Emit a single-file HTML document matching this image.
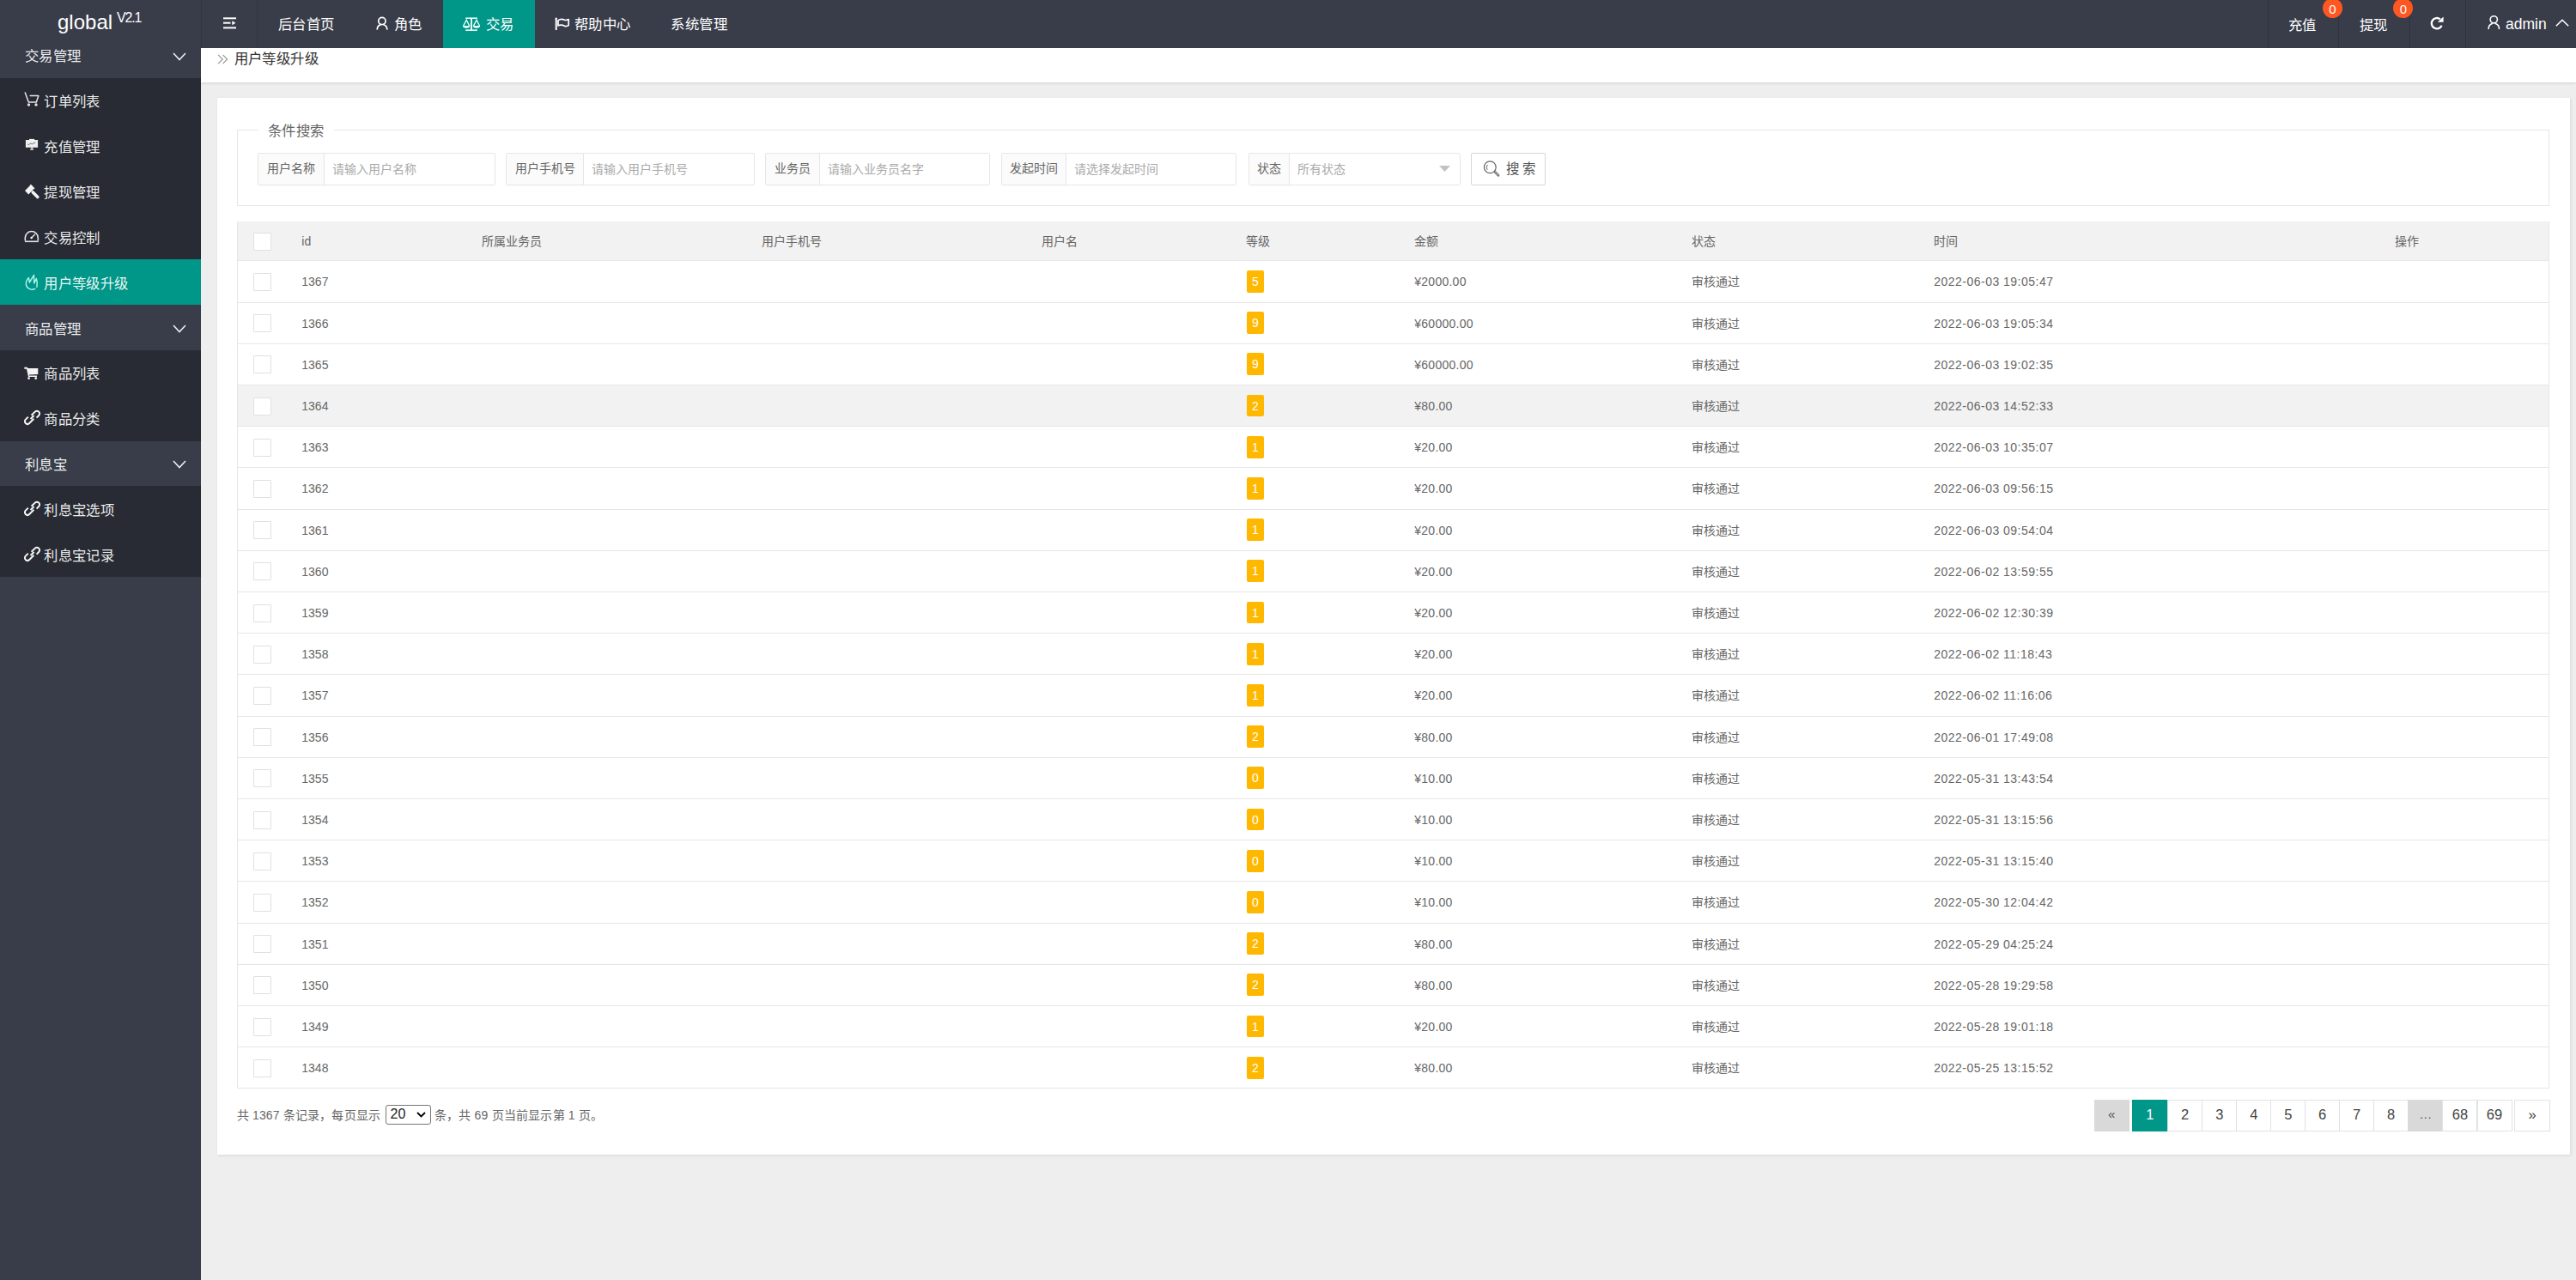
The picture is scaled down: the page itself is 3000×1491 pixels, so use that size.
<!DOCTYPE html>
<html lang="zh-CN"><head><meta charset="utf-8"><title>用户等级升级</title>
<style>
*{margin:0;padding:0;box-sizing:border-box}
html,body{width:3000px;height:1491px;overflow:hidden;background:#eeeeee;font-family:"Liberation Sans",sans-serif;color:#666}
.a{position:absolute}
.hd{position:absolute;left:0;top:0;width:3000px;height:56px;background:#393D49;z-index:5}
.side{position:absolute;left:0;top:0;width:234px;height:1491px;background:#393D49;overflow:hidden;z-index:3}
.nt{position:absolute;white-space:nowrap;color:#fff;font-size:16.4px;letter-spacing:0.4px;line-height:20px}
.par{position:absolute;left:0;width:234px;height:52.85px;background:#393D49}
.chg{position:absolute;left:0;width:234px;background:#282B33}
.it{position:absolute;left:0;width:234px;height:52.85px}
.it .t{position:absolute;left:51.2px;top:17.6px;font-size:16.4px;letter-spacing:0.4px;line-height:20px;color:rgba(255,255,255,.93);white-space:nowrap}
.par .t{position:absolute;left:28.75px;top:17.55px;font-size:16.4px;letter-spacing:0.4px;line-height:20px;color:rgba(255,255,255,.93);white-space:nowrap}
.ico{position:absolute}
.crumb{position:absolute;left:234px;top:56px;width:2766px;height:40.3px;background:#fff;box-shadow:0 1px 3px rgba(0,0,0,.12);z-index:2}
.card{position:absolute;left:252.7px;top:114px;width:2740.3px;height:1231px;background:#fff;box-shadow:1px 1px 3px rgba(0,0,0,.1)}
.fs{position:absolute;border:1px solid #e6e6e6}
.grp{position:absolute;top:178px;height:38px;border:1px solid #e6e6e6;border-radius:2px;background:#fff}
.lab{position:absolute;left:0;top:0;height:36px;background:#FBFBFB;border-right:1px solid #e6e6e6}
.gt{position:absolute;font-size:14px;line-height:18px;white-space:nowrap}
.tbl{position:absolute;left:276px;width:2693px;border:1px solid #e6e6e6;border-top:0}
.row{position:absolute;left:0;width:2691px;border-bottom:1px solid #e6e6e6}
.c{position:absolute;font-size:14px;line-height:18px;white-space:nowrap;color:#666}
.cb{position:absolute;left:18px;width:21px;height:21px;border:1px solid #e0e0e0;background:#fff;border-radius:1px}
.bdg{position:absolute;width:20.3px;height:25.8px;background:#FFB800;color:#fff;border-radius:2px;font-size:14px;line-height:27.6px;text-align:center}
.pg{position:absolute;top:1281px;height:37.2px;border:1px solid #e2e2e2;background:#fff;color:#444;font-size:16.5px;line-height:32.5px;text-align:center}
</style></head><body>

<div class="side">
<div class="par" style="top:37.95px"><span class="t">交易管理</span><svg class="ico" style="left:201px;top:22.6px" width="16" height="10" viewBox="0 0 16 10"><path d="M1 1 L8 8.6 L15 1" fill="none" stroke="#fff" stroke-opacity=".9" stroke-width="1.6"/></svg></div>
<div class="chg" style="top:90.8px;height:264.25px">
<div class="it" style="top:0.0px;"><span class="t">订单列表</span><svg class="ico" style="left:24px;top:12.6px" width="28" height="28" viewBox="0 0 28 28"><path d="M5.3 5 L9.3 16 L18.3 16 L20.9 8.6 L11.2 8.6" fill="none" stroke="#fff" stroke-opacity=".88" stroke-width="1.5" stroke-linejoin="round" stroke-linecap="round"/><circle cx="9.5" cy="19" r="1.7" fill="#fff" fill-opacity=".88"/><circle cx="18" cy="19" r="1.7" fill="#fff" fill-opacity=".88"/></svg></div>
<div class="it" style="top:52.85px;"><span class="t">充值管理</span><svg class="ico" style="left:24px;top:12.6px" width="28" height="28" viewBox="0 0 28 28"><rect x="5.9" y="7" width="14.2" height="8.8" fill="#fff" fill-opacity=".92"/><rect x="10" y="5.9" width="6.2" height="1.6" fill="#fff" fill-opacity=".92"/><rect x="12.3" y="15.5" width="1.8" height="2.3" fill="#fff" fill-opacity=".9"/><rect x="11" y="17.6" width="4.2" height="1.1" fill="#fff" fill-opacity=".9"/><path d="M8.5 12.3 C10 13.5, 11 10, 12.8 11.5 C14 12.6, 15 10.2, 17.2 10" fill="none" stroke="#555" stroke-width="0.9"/></svg></div>
<div class="it" style="top:105.7px;"><span class="t">提现管理</span><svg class="ico" style="left:24px;top:12.6px" width="28" height="28" viewBox="0 0 28 28"><path d="M11.8 5.5 L16.6 10.5 L15.2 11.3 L10.4 16.3 L9.2 17.5 L5 12.9 L6.2 12.1 L11 7.1 Z" fill="#fff" fill-opacity=".95"/><path d="M14.3 15 L19.8 20.5" stroke="#fff" stroke-opacity=".95" stroke-width="3.6" stroke-linecap="round"/></svg></div>
<div class="it" style="top:158.55px;"><span class="t">交易控制</span><svg class="ico" style="left:24px;top:12.6px" width="28" height="28" viewBox="0 0 28 28"><path d="M5.3 18.5 L5.3 15 A7.5 7.5 0 0 1 20.3 15 L20.3 18.5" fill="none" stroke="#fff" stroke-opacity=".88" stroke-width="1.6"/><path d="M5 19.3 L20.8 19.3" stroke="#fff" stroke-opacity=".88" stroke-width="1.6"/><path d="M12.7 15 L16.6 11" stroke="#fff" stroke-opacity=".9" stroke-width="1.3" stroke-linecap="round"/><circle cx="12.6" cy="15" r="1.2" fill="#fff"/></svg></div>
<div class="it" style="top:211.4px;background:#009688;"><span class="t">用户等级升级</span><svg class="ico" style="left:24px;top:12.6px" width="28" height="28" viewBox="0 0 28 28"><path d="M16.8 21.4 C13 23.2, 7.2 21.8, 6.4 16.5 C5.9 13, 7.5 10.5, 9.5 8.5 L10.3 14 L15.5 5.5 L15.8 15 L18.3 9.5 C19.3 12, 19.9 15.5, 18.9 19.3" fill="none" stroke="#b9fff2" stroke-opacity=".9" stroke-width="1.5" stroke-linejoin="round" stroke-linecap="round"/></svg></div>
</div>
<div class="par" style="top:355.05px"><span class="t">商品管理</span><svg class="ico" style="left:201px;top:22.6px" width="16" height="10" viewBox="0 0 16 10"><path d="M1 1 L8 8.6 L15 1" fill="none" stroke="#fff" stroke-opacity=".9" stroke-width="1.6"/></svg></div>
<div class="chg" style="top:407.9px;height:105.7px">
<div class="it" style="top:0.0px"><span class="t">商品列表</span><svg class="ico" style="left:24px;top:12.6px" width="28" height="28" viewBox="0 0 28 28"><path d="M4.3 7.8 L7.9 7.8 L8.4 8.9 L20.3 8.9 L20.3 16 L9.9 16.6 L10.2 17.6 L19 17.6 L19 19.1 L9 19.1 L7 9.7 L4.3 9.7 Z" fill="#fff" fill-opacity=".95"/><circle cx="9.6" cy="20.6" r="1.4" fill="#fff"/><circle cx="17.7" cy="20.6" r="1.4" fill="#fff"/></svg></div>
<div class="it" style="top:52.85px"><span class="t">商品分类</span><svg class="ico" style="left:24px;top:12.6px" width="28" height="28" viewBox="0 0 28 28"><g fill="none" stroke="#fff" stroke-opacity=".95" stroke-width="2"><path d="M13.2 11.2 L17.4 7 A3.1 3.1 0 0 1 21.8 11.4 L19.2 14" transform="translate(-0.6,-0.4)"/><path d="M15.6 13.6 L10.4 18.8 A3.1 3.1 0 0 1 6 14.4 L9 11.4" transform="translate(-0.2,1.2)"/><path d="M11.6 15 L15.6 11" /></g></svg></div>
</div>
<div class="par" style="top:513.6px"><span class="t">利息宝</span><svg class="ico" style="left:201px;top:22.6px" width="16" height="10" viewBox="0 0 16 10"><path d="M1 1 L8 8.6 L15 1" fill="none" stroke="#fff" stroke-opacity=".9" stroke-width="1.6"/></svg></div>
<div class="chg" style="top:566.45px;height:105.7px">
<div class="it" style="top:0.0px"><span class="t">利息宝选项</span><svg class="ico" style="left:24px;top:12.6px" width="28" height="28" viewBox="0 0 28 28"><g fill="none" stroke="#fff" stroke-opacity=".95" stroke-width="2"><path d="M13.2 11.2 L17.4 7 A3.1 3.1 0 0 1 21.8 11.4 L19.2 14" transform="translate(-0.6,-0.4)"/><path d="M15.6 13.6 L10.4 18.8 A3.1 3.1 0 0 1 6 14.4 L9 11.4" transform="translate(-0.2,1.2)"/><path d="M11.6 15 L15.6 11" /></g></svg></div>
<div class="it" style="top:52.85px"><span class="t">利息宝记录</span><svg class="ico" style="left:24px;top:12.6px" width="28" height="28" viewBox="0 0 28 28"><g fill="none" stroke="#fff" stroke-opacity=".95" stroke-width="2"><path d="M13.2 11.2 L17.4 7 A3.1 3.1 0 0 1 21.8 11.4 L19.2 14" transform="translate(-0.6,-0.4)"/><path d="M15.6 13.6 L10.4 18.8 A3.1 3.1 0 0 1 6 14.4 L9 11.4" transform="translate(-0.2,1.2)"/><path d="M11.6 15 L15.6 11" /></g></svg></div>
</div>
</div>
<div class="hd">
<div class="a" style="left:67px;top:11.3px;font-size:24px;line-height:30px;color:#fff;white-space:nowrap">global</div>
<div class="a" style="left:136px;top:10.6px;font-size:16px;letter-spacing:-1.2px;line-height:20px;color:#fff;white-space:nowrap">V2.1</div>
<div class="a" style="left:234px;top:0;width:1px;height:56px;background:rgba(0,0,0,.12)"></div>
<div class="a" style="left:299px;top:0;width:1px;height:56px;background:rgba(0,0,0,.12)"></div>
<svg class="a" style="left:259px;top:20px" width="17" height="14" viewBox="0 0 17 14"><rect x="1" y="0.3" width="15" height="2" fill="#fff"/><rect x="1" y="5.7" width="8.5" height="2" fill="#fff"/><path d="M11.3 4.2 L15.4 6.7 L11.3 9.2 Z" fill="#fff"/><rect x="1" y="11.4" width="15" height="2" fill="#fff"/></svg>
<div class="nt" style="left:323.8px;top:18px">后台首页</div>
<div class="a" style="left:516px;top:0;width:107px;height:56px;background:#009688"></div>
<svg class="a" style="left:432px;top:14px" width="28" height="28" viewBox="0 0 28 28"><circle cx="12.9" cy="10.5" r="4.1" fill="none" stroke="#fff" stroke-width="1.7"/><path d="M7.3 20 A5.9 5.9 0 0 1 11.3 14.6 M14.9 14.7 A5.9 5.9 0 0 1 18.8 20" fill="none" stroke="#fff" stroke-width="1.7" stroke-linecap="round"/></svg><svg class="a" style="left:535px;top:14px" width="28" height="28" viewBox="0 0 28 28"><g stroke="#e8fffb" fill="none"><path d="M7.2 7.2 L20.8 7.2" stroke-width="1.6"/><path d="M14 7.5 L14 21" stroke-width="2"/><path d="M7.2 21.2 L20.8 21.2" stroke-width="1.7"/><path d="M4.6 16.3 L8.2 9.3 L11.8 16.3 M16.4 16.3 L20 9.3 L23.6 16.3" stroke-width="1.4"/></g><path d="M4 16 L12.2 16 A4.1 2.8 0 0 1 4 16 Z M15.9 16 L24.1 16 A4.1 2.8 0 0 1 15.9 16 Z" fill="#e8fffb"/></svg><svg class="a" style="left:640px;top:14px" width="28" height="28" viewBox="0 0 28 28"><path d="M7.7 8 L7.7 21" stroke="#fff" stroke-width="2"/><circle cx="7.7" cy="7.8" r="1.2" fill="#fff"/><path d="M10 9.8 C13 7.5, 16 8.5, 17.5 9.2 C19 9.9, 21 9.2, 22.2 8.6 L22.2 15.6 C21 16.3, 19 17, 17.5 16.2 C16 15.4, 13 14.4, 10 15.8 Z" fill="none" stroke="#fff" stroke-width="1.7" stroke-linejoin="round"/></svg>
<div class="nt" style="left:458.8px;top:18px">角色</div>
<div class="nt" style="left:566px;top:18px">交易</div>
<div class="nt" style="left:668.8px;top:18px">帮助中心</div>
<div class="nt" style="left:781.4px;top:18px">系统管理</div>
<div class="a" style="left:2641px;top:0;width:1px;height:56px;background:rgba(0,0,0,.15)"></div>
<div class="a" style="left:2723.4px;top:0;width:1px;height:56px;background:rgba(0,0,0,.15)"></div>
<div class="a" style="left:2805.7px;top:0;width:1px;height:56px;background:rgba(0,0,0,.15)"></div>
<div class="a" style="left:2871px;top:0;width:1px;height:56px;background:rgba(0,0,0,.15)"></div>
<div class="nt" style="left:2665px;top:19px">充值</div>
<div class="nt" style="left:2747.5px;top:19px">提现</div>
<div class="a" style="left:2705.0px;top:-2.5px;width:23px;height:23px;border-radius:50%;background:#FF5722;color:#fff;font-size:15px;line-height:25px;text-align:center">0</div>
<div class="a" style="left:2787.3px;top:-2.5px;width:23px;height:23px;border-radius:50%;background:#FF5722;color:#fff;font-size:15px;line-height:25px;text-align:center">0</div>
<div class="nt" style="left:2918px;top:17.5px;font-size:17.5px;letter-spacing:0">admin</div>
<svg class="a" style="left:2824px;top:14px" width="28" height="28" viewBox="0 0 28 28"><path d="M19.6 15.8 A6.2 6.2 0 1 1 17.8 8.3" fill="none" stroke="#fff" stroke-width="2.3"/><path d="M14.8 11.8 L21.6 11.8 L21.6 5.4 Z" fill="#fff"/></svg><svg class="a" style="left:2890px;top:13px" width="28" height="28" viewBox="0 0 28 28"><circle cx="14.3" cy="9.8" r="4.1" fill="none" stroke="#fff" stroke-width="1.6"/><path d="M8.2 20.5 A6.3 6.3 0 0 1 12.4 14.4 M16.2 14.4 A6.3 6.3 0 0 1 20.5 20.5" fill="none" stroke="#fff" stroke-width="1.6" stroke-linecap="round"/></svg><svg class="a" style="left:2976px;top:22px" width="16" height="9" viewBox="0 0 16 9"><path d="M0.8 8.3 L8 1.3 L15.2 8.3" fill="none" stroke="#fff" stroke-width="1.6"/></svg>
</div>
<div class="crumb">
<svg class="a" style="left:18.5px;top:6.5px" width="13" height="12" viewBox="0 0 13 12"><path d="M1.2 0.8 L6.2 6 L1.2 11.2 M6.6 0.8 L11.6 6 L6.6 11.2" fill="none" stroke="#999" stroke-width="1.2"/></svg>
<div class="a" style="left:38.6px;top:2px;font-size:16.4px;letter-spacing:0.4px;line-height:20px;color:#333;white-space:nowrap">用户等级升级</div>
</div>
<div class="card"></div>
<div class="fs" style="left:276px;top:151px;width:2693px;height:89px"></div>
<div class="a" style="left:301px;top:142px;width:88.4px;height:22px;background:#fff"></div>
<div class="a" style="left:312px;top:142.2px;font-size:16.4px;letter-spacing:0.4px;line-height:20px;color:#666;white-space:nowrap">条件搜索</div>
<div class="grp" style="left:300.3px;width:276.3px"><div class="lab" style="width:77.0px"></div><div class="gt" style="left:9.5px;top:8.2px;color:#666">用户名称</div><div class="gt" style="left:86.0px;top:8.6px;color:#aaa">请输入用户名称</div></div>
<div class="grp" style="left:589.3px;width:289.3px"><div class="lab" style="width:90.2px"></div><div class="gt" style="left:9.5px;top:8.2px;color:#666">用户手机号</div><div class="gt" style="left:99.2px;top:8.6px;color:#aaa">请输入用户手机号</div></div>
<div class="grp" style="left:891.4px;width:261.6px"><div class="lab" style="width:62.5px"></div><div class="gt" style="left:9.5px;top:8.2px;color:#666">业务员</div><div class="gt" style="left:71.5px;top:8.6px;color:#aaa">请输入业务员名字</div></div>
<div class="grp" style="left:1165.6px;width:274.9px"><div class="lab" style="width:75.9px"></div><div class="gt" style="left:9.5px;top:8.2px;color:#666">发起时间</div><div class="gt" style="left:84.9px;top:8.6px;color:#aaa">请选择发起时间</div></div>
<div class="grp" style="left:1453.6px;width:247.4px"><div class="lab" style="width:47.9px"></div><div class="gt" style="left:9.5px;top:8.2px;color:#666">状态</div><div class="gt" style="left:56.9px;top:8.6px;color:#aaa">所有状态</div></div>
<svg class="a" style="left:1676.3px;top:192.5px" width="13" height="7" viewBox="0 0 13 7"><path d="M0 0 L13 0 L6.5 7 Z" fill="#c2c2c2"/></svg>
<div class="a" style="left:1713.4px;top:178px;width:86.4px;height:38px;border:1px solid #d6d6d6;border-radius:2px;background:#fff"></div>
<svg class="a" style="left:1725.5px;top:186.5px" width="21" height="21" viewBox="0 0 21 21"><circle cx="9.3" cy="7.8" r="6.9" fill="none" stroke="#666" stroke-width="1.2"/><path d="M15.2 13.6 L19 17.2" stroke="#666" stroke-width="2.8" stroke-linecap="round"/><path d="M15.2 13.6 L19 17.2" stroke="#fff" stroke-width="0.8" stroke-linecap="round"/><path d="M6.4 5 A4.6 4.6 0 0 0 6.2 10.8" fill="none" stroke="#666" stroke-width="1"/></svg>
<div class="a" style="left:1754.2px;top:187.3px;font-size:15.5px;line-height:20px;color:#555;white-space:nowrap;letter-spacing:-0.6px">搜 索</div>
<div class="tbl" style="top:258.1px;height:1010.3px">
<div class="row" style="top:0;height:46.3px;background:#f2f2f2"></div>
<div class="cb" style="top:12.65px"></div>
<div class="c" style="left:74.3px;top:14.15px">id</div>
<div class="c" style="left:284.4px;top:14.15px">所属业务员</div>
<div class="c" style="left:610.4px;top:14.15px">用户手机号</div>
<div class="c" style="left:935.7px;top:14.15px">用户名</div>
<div class="c" style="left:1174px;top:14.15px">等级</div>
<div class="c" style="left:1370.3px;top:14.15px">金额</div>
<div class="c" style="left:1692.6px;top:14.15px">状态</div>
<div class="c" style="left:1975.3px;top:14.15px">时间</div>
<div class="c" style="left:2512.4px;top:14.15px">操作</div>
<div class="row" style="top:46.3px;height:48.2px;">
<div class="cb" style="top:13.6px"></div>
<div class="c" style="left:74.3px;top:15.1px">1367</div>
<div class="bdg" style="left:1174.7px;top:10.7px">5</div>
<div class="c" style="left:1370.3px;top:15.1px;letter-spacing:0.25px">¥2000.00</div>
<div class="c" style="left:1692.6px;top:15.1px">审核通过</div>
<div class="c" style="left:1975.3px;top:15.1px;letter-spacing:0.48px">2022-06-03 19:05:47</div>
</div>
<div class="row" style="top:94.5px;height:48.2px;">
<div class="cb" style="top:13.6px"></div>
<div class="c" style="left:74.3px;top:15.1px">1366</div>
<div class="bdg" style="left:1174.7px;top:10.7px">9</div>
<div class="c" style="left:1370.3px;top:15.1px;letter-spacing:0.25px">¥60000.00</div>
<div class="c" style="left:1692.6px;top:15.1px">审核通过</div>
<div class="c" style="left:1975.3px;top:15.1px;letter-spacing:0.48px">2022-06-03 19:05:34</div>
</div>
<div class="row" style="top:142.7px;height:48.2px;">
<div class="cb" style="top:13.6px"></div>
<div class="c" style="left:74.3px;top:15.1px">1365</div>
<div class="bdg" style="left:1174.7px;top:10.7px">9</div>
<div class="c" style="left:1370.3px;top:15.1px;letter-spacing:0.25px">¥60000.00</div>
<div class="c" style="left:1692.6px;top:15.1px">审核通过</div>
<div class="c" style="left:1975.3px;top:15.1px;letter-spacing:0.48px">2022-06-03 19:02:35</div>
</div>
<div class="row" style="top:190.9px;height:48.2px;background:#f2f2f2;">
<div class="cb" style="top:13.6px"></div>
<div class="c" style="left:74.3px;top:15.1px">1364</div>
<div class="bdg" style="left:1174.7px;top:10.7px">2</div>
<div class="c" style="left:1370.3px;top:15.1px;letter-spacing:0.25px">¥80.00</div>
<div class="c" style="left:1692.6px;top:15.1px">审核通过</div>
<div class="c" style="left:1975.3px;top:15.1px;letter-spacing:0.48px">2022-06-03 14:52:33</div>
</div>
<div class="row" style="top:239.1px;height:48.2px;">
<div class="cb" style="top:13.6px"></div>
<div class="c" style="left:74.3px;top:15.1px">1363</div>
<div class="bdg" style="left:1174.7px;top:10.7px">1</div>
<div class="c" style="left:1370.3px;top:15.1px;letter-spacing:0.25px">¥20.00</div>
<div class="c" style="left:1692.6px;top:15.1px">审核通过</div>
<div class="c" style="left:1975.3px;top:15.1px;letter-spacing:0.48px">2022-06-03 10:35:07</div>
</div>
<div class="row" style="top:287.3px;height:48.2px;">
<div class="cb" style="top:13.6px"></div>
<div class="c" style="left:74.3px;top:15.1px">1362</div>
<div class="bdg" style="left:1174.7px;top:10.7px">1</div>
<div class="c" style="left:1370.3px;top:15.1px;letter-spacing:0.25px">¥20.00</div>
<div class="c" style="left:1692.6px;top:15.1px">审核通过</div>
<div class="c" style="left:1975.3px;top:15.1px;letter-spacing:0.48px">2022-06-03 09:56:15</div>
</div>
<div class="row" style="top:335.5px;height:48.2px;">
<div class="cb" style="top:13.6px"></div>
<div class="c" style="left:74.3px;top:15.1px">1361</div>
<div class="bdg" style="left:1174.7px;top:10.7px">1</div>
<div class="c" style="left:1370.3px;top:15.1px;letter-spacing:0.25px">¥20.00</div>
<div class="c" style="left:1692.6px;top:15.1px">审核通过</div>
<div class="c" style="left:1975.3px;top:15.1px;letter-spacing:0.48px">2022-06-03 09:54:04</div>
</div>
<div class="row" style="top:383.7px;height:48.2px;">
<div class="cb" style="top:13.6px"></div>
<div class="c" style="left:74.3px;top:15.1px">1360</div>
<div class="bdg" style="left:1174.7px;top:10.7px">1</div>
<div class="c" style="left:1370.3px;top:15.1px;letter-spacing:0.25px">¥20.00</div>
<div class="c" style="left:1692.6px;top:15.1px">审核通过</div>
<div class="c" style="left:1975.3px;top:15.1px;letter-spacing:0.48px">2022-06-02 13:59:55</div>
</div>
<div class="row" style="top:431.9px;height:48.2px;">
<div class="cb" style="top:13.6px"></div>
<div class="c" style="left:74.3px;top:15.1px">1359</div>
<div class="bdg" style="left:1174.7px;top:10.7px">1</div>
<div class="c" style="left:1370.3px;top:15.1px;letter-spacing:0.25px">¥20.00</div>
<div class="c" style="left:1692.6px;top:15.1px">审核通过</div>
<div class="c" style="left:1975.3px;top:15.1px;letter-spacing:0.48px">2022-06-02 12:30:39</div>
</div>
<div class="row" style="top:480.1px;height:48.2px;">
<div class="cb" style="top:13.6px"></div>
<div class="c" style="left:74.3px;top:15.1px">1358</div>
<div class="bdg" style="left:1174.7px;top:10.7px">1</div>
<div class="c" style="left:1370.3px;top:15.1px;letter-spacing:0.25px">¥20.00</div>
<div class="c" style="left:1692.6px;top:15.1px">审核通过</div>
<div class="c" style="left:1975.3px;top:15.1px;letter-spacing:0.48px">2022-06-02 11:18:43</div>
</div>
<div class="row" style="top:528.3px;height:48.2px;">
<div class="cb" style="top:13.6px"></div>
<div class="c" style="left:74.3px;top:15.1px">1357</div>
<div class="bdg" style="left:1174.7px;top:10.7px">1</div>
<div class="c" style="left:1370.3px;top:15.1px;letter-spacing:0.25px">¥20.00</div>
<div class="c" style="left:1692.6px;top:15.1px">审核通过</div>
<div class="c" style="left:1975.3px;top:15.1px;letter-spacing:0.48px">2022-06-02 11:16:06</div>
</div>
<div class="row" style="top:576.5px;height:48.2px;">
<div class="cb" style="top:13.6px"></div>
<div class="c" style="left:74.3px;top:15.1px">1356</div>
<div class="bdg" style="left:1174.7px;top:10.7px">2</div>
<div class="c" style="left:1370.3px;top:15.1px;letter-spacing:0.25px">¥80.00</div>
<div class="c" style="left:1692.6px;top:15.1px">审核通过</div>
<div class="c" style="left:1975.3px;top:15.1px;letter-spacing:0.48px">2022-06-01 17:49:08</div>
</div>
<div class="row" style="top:624.7px;height:48.2px;">
<div class="cb" style="top:13.6px"></div>
<div class="c" style="left:74.3px;top:15.1px">1355</div>
<div class="bdg" style="left:1174.7px;top:10.7px">0</div>
<div class="c" style="left:1370.3px;top:15.1px;letter-spacing:0.25px">¥10.00</div>
<div class="c" style="left:1692.6px;top:15.1px">审核通过</div>
<div class="c" style="left:1975.3px;top:15.1px;letter-spacing:0.48px">2022-05-31 13:43:54</div>
</div>
<div class="row" style="top:672.9px;height:48.2px;">
<div class="cb" style="top:13.6px"></div>
<div class="c" style="left:74.3px;top:15.1px">1354</div>
<div class="bdg" style="left:1174.7px;top:10.7px">0</div>
<div class="c" style="left:1370.3px;top:15.1px;letter-spacing:0.25px">¥10.00</div>
<div class="c" style="left:1692.6px;top:15.1px">审核通过</div>
<div class="c" style="left:1975.3px;top:15.1px;letter-spacing:0.48px">2022-05-31 13:15:56</div>
</div>
<div class="row" style="top:721.1px;height:48.2px;">
<div class="cb" style="top:13.6px"></div>
<div class="c" style="left:74.3px;top:15.1px">1353</div>
<div class="bdg" style="left:1174.7px;top:10.7px">0</div>
<div class="c" style="left:1370.3px;top:15.1px;letter-spacing:0.25px">¥10.00</div>
<div class="c" style="left:1692.6px;top:15.1px">审核通过</div>
<div class="c" style="left:1975.3px;top:15.1px;letter-spacing:0.48px">2022-05-31 13:15:40</div>
</div>
<div class="row" style="top:769.3px;height:48.2px;">
<div class="cb" style="top:13.6px"></div>
<div class="c" style="left:74.3px;top:15.1px">1352</div>
<div class="bdg" style="left:1174.7px;top:10.7px">0</div>
<div class="c" style="left:1370.3px;top:15.1px;letter-spacing:0.25px">¥10.00</div>
<div class="c" style="left:1692.6px;top:15.1px">审核通过</div>
<div class="c" style="left:1975.3px;top:15.1px;letter-spacing:0.48px">2022-05-30 12:04:42</div>
</div>
<div class="row" style="top:817.5px;height:48.2px;">
<div class="cb" style="top:13.6px"></div>
<div class="c" style="left:74.3px;top:15.1px">1351</div>
<div class="bdg" style="left:1174.7px;top:10.7px">2</div>
<div class="c" style="left:1370.3px;top:15.1px;letter-spacing:0.25px">¥80.00</div>
<div class="c" style="left:1692.6px;top:15.1px">审核通过</div>
<div class="c" style="left:1975.3px;top:15.1px;letter-spacing:0.48px">2022-05-29 04:25:24</div>
</div>
<div class="row" style="top:865.7px;height:48.2px;">
<div class="cb" style="top:13.6px"></div>
<div class="c" style="left:74.3px;top:15.1px">1350</div>
<div class="bdg" style="left:1174.7px;top:10.7px">2</div>
<div class="c" style="left:1370.3px;top:15.1px;letter-spacing:0.25px">¥80.00</div>
<div class="c" style="left:1692.6px;top:15.1px">审核通过</div>
<div class="c" style="left:1975.3px;top:15.1px;letter-spacing:0.48px">2022-05-28 19:29:58</div>
</div>
<div class="row" style="top:913.9px;height:48.2px;">
<div class="cb" style="top:13.6px"></div>
<div class="c" style="left:74.3px;top:15.1px">1349</div>
<div class="bdg" style="left:1174.7px;top:10.7px">1</div>
<div class="c" style="left:1370.3px;top:15.1px;letter-spacing:0.25px">¥20.00</div>
<div class="c" style="left:1692.6px;top:15.1px">审核通过</div>
<div class="c" style="left:1975.3px;top:15.1px;letter-spacing:0.48px">2022-05-28 19:01:18</div>
</div>
<div class="row" style="top:962.1px;height:48.2px;">
<div class="cb" style="top:13.6px"></div>
<div class="c" style="left:74.3px;top:15.1px">1348</div>
<div class="bdg" style="left:1174.7px;top:10.7px">2</div>
<div class="c" style="left:1370.3px;top:15.1px;letter-spacing:0.25px">¥80.00</div>
<div class="c" style="left:1692.6px;top:15.1px">审核通过</div>
<div class="c" style="left:1975.3px;top:15.1px;letter-spacing:0.48px">2022-05-25 13:15:52</div>
</div>
</div>
<div class="a" style="left:275.8px;top:1290px;font-size:14px;line-height:18px;color:#666;white-space:nowrap;letter-spacing:0.15px">共 1367 条记录，每页显示</div>
<div class="a" style="left:448.6px;top:1287.3px;width:53.1px;height:22.4px;border:1px solid #767676;border-radius:3px;background:#fff"></div>
<div class="a" style="left:454.5px;top:1288.8px;font-size:16px;line-height:18px;color:#222;white-space:nowrap">20</div>
<svg class="a" style="left:485px;top:1295px" width="11" height="7" viewBox="0 0 11 7"><path d="M1 1 L5.5 5.5 L10 1" fill="none" stroke="#000" stroke-width="1.8"/></svg>
<div class="a" style="left:505.8px;top:1290px;font-size:14px;line-height:18px;color:#666;white-space:nowrap;letter-spacing:0.2px">条，共 69 页当前显示第 1 页。</div>
<div class="pg" style="left:2438.7px;width:41.0px;background:#d9d9d9;border-color:#d9d9d9;color:#555;font-size:15px;">«</div>
<div class="pg" style="left:2482.7px;width:42.2px;background:#009688;border-color:#009688;color:#fff;">1</div>
<div class="pg" style="left:2523.9px;width:41.3px;">2</div>
<div class="pg" style="left:2564.2px;width:41.1px;">3</div>
<div class="pg" style="left:2604.3px;width:41.1px;">4</div>
<div class="pg" style="left:2644.4px;width:40.8px;">5</div>
<div class="pg" style="left:2684.2px;width:41.0px;">6</div>
<div class="pg" style="left:2724.2px;width:40.9px;">7</div>
<div class="pg" style="left:2764.1px;width:41.0px;">8</div>
<div class="pg" style="left:2804.1px;width:41.3px;background:#d9d9d9;border-color:#d9d9d9;color:#555;font-size:15px;">…</div>
<div class="pg" style="left:2844.4px;width:41.1px;">68</div>
<div class="pg" style="left:2884.5px;width:41.1px;">69</div>
<div class="pg" style="left:2928.3px;width:41.7px;">»</div>
</body></html>
